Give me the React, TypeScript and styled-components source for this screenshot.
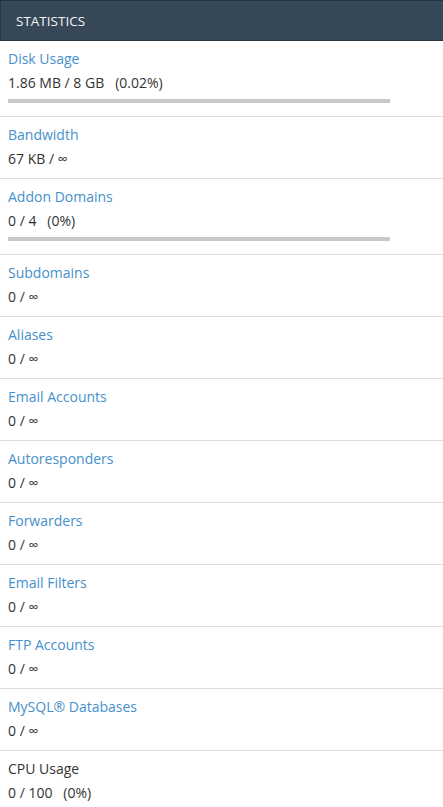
import React from "react";
import styled, { createGlobalStyle } from "styled-components";

const Global = createGlobalStyle`
  html, body { margin: 0; padding: 0; background: #fff; }
  body { font-family: "Open Sans", "Liberation Sans", sans-serif; }
`;

const Panel = styled.section`
  width: 443px;
  background: #fff;
`;

const Header = styled.header`
  box-sizing: border-box;
  height: 41px;
  background: #364758;
  border-top: 1px solid #25323f;
  border-left: 1px solid #2a3745;
  border-bottom: 1px solid #27333f;
  color: #f2f4f6;
  font-size: 13.5px;
  display: flex;
  align-items: center;
  padding: 0 15px;
  text-transform: uppercase;
`;

const Row = styled.div`
  padding: 8px 8px 9px;
  border-bottom: 1px solid #dcdcdc;
  &:last-child { border-bottom: none; }
`;

const Label = styled.a<{ $plain?: boolean }>`
  display: block;
  font-size: 14px;
  line-height: 20px;
  color: ${(p) => (p.$plain ? "#333" : "#4690cb")};
  text-decoration: none;
`;

const Value = styled.div`
  margin-top: 4px;
  font-size: 14px;
  line-height: 20px;
  color: #333;
  white-space: pre;
`;

const Bar = styled.div`
  margin: 6px 0 4px;
  width: 382px;
  height: 4px;
  background: #c9c9c9;
`;

type Stat = { label: string; value: string; bar?: boolean; plain?: boolean };

const stats: Stat[] = [
  { label: "Disk Usage", value: "1.86 MB / 8 GB \u00a0\u00a0(0.02%)", bar: true },
  { label: "Bandwidth", value: "67 KB / ∞" },
  { label: "Addon Domains", value: "0 / 4 \u00a0\u00a0(0%)", bar: true },
  { label: "Subdomains", value: "0 / ∞" },
  { label: "Aliases", value: "0 / ∞" },
  { label: "Email Accounts", value: "0 / ∞" },
  { label: "Autoresponders", value: "0 / ∞" },
  { label: "Forwarders", value: "0 / ∞" },
  { label: "Email Filters", value: "0 / ∞" },
  { label: "FTP Accounts", value: "0 / ∞" },
  { label: "MySQL® Databases", value: "0 / ∞" },
  { label: "CPU Usage", value: "0 / 100 \u00a0\u00a0(0%)", plain: true },
];

export default function App() {
  return (
    <>
      <Global />
      <Panel>
        <Header>Statistics</Header>
        {stats.map((s) => (
          <Row key={s.label}>
            <Label $plain={s.plain}>{s.label}</Label>
            <Value>{s.value}</Value>
            {s.bar && <Bar />}
          </Row>
        ))}
      </Panel>
    </>
  );
}
